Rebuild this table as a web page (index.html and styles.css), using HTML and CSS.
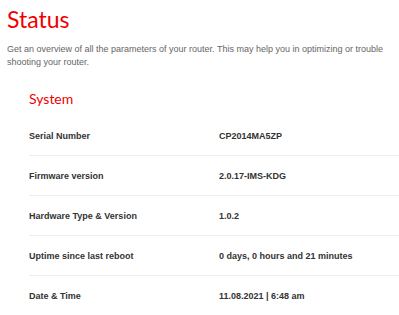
FILE: index.html
```html
<!DOCTYPE html>
<html lang="en">
<head>
  <meta charset="UTF-8" />
  <meta name="viewport" content="width=device-width, initial-scale=1" />
  <title>Status</title>
  <link rel="stylesheet" href="styles.css">
</head>
<body>
  <div class="page">
    <h1 class="page-title">Status</h1>
    <p class="page-intro">
      Get an overview of all the parameters of your router. This may help you in optimizing or trouble
      shooting your router.
    </p>

    <section class="status-section">
      <h2 class="section-title">System</h2>
      <div class="status-list">
        <div class="status-row">
          <span class="status-label">Serial Number</span>
          <span class="status-value">CP2014MA5ZP</span>
        </div>
        <div class="status-row">
          <span class="status-label">Firmware version</span>
          <span class="status-value">2.0.17-IMS-KDG</span>
        </div>
        <div class="status-row">
          <span class="status-label">Hardware Type &amp; Version</span>
          <span class="status-value">1.0.2</span>
        </div>
        <div class="status-row">
          <span class="status-label">Uptime since last reboot</span>
          <span class="status-value">0 days, 0 hours and 21 minutes</span>
        </div>
        <div class="status-row">
          <span class="status-label">Date &amp; Time</span>
          <span class="status-value">11.08.2021 | 6:48 am</span>
        </div>
      </div>
    </section>
  </div>
</body>
</html>
```

FILE: styles.css
```css
body {
  margin: 0;
  padding: 0;
  background: #fff;
  font-family: 'Liberation Sans', Arial, sans-serif;
  color: #333;
}

.page {
  padding: 4px 7px 0 7px;
}

.page-title {
  margin: 0;
  font-family: 'Lato', sans-serif;
  font-weight: 400;
  font-size: 23px;
  line-height: 30px;
  color: #f00000;
}

.page-intro {
  margin: 9px 0 0 0;
  font-size: 9px;
  line-height: 13px;
  color: #666;
}

.status-section {
  padding-left: 22px;
  margin-top: 20px;
}

.section-title {
  margin: 0;
  font-family: 'Lato', sans-serif;
  font-weight: 400;
  font-size: 14px;
  line-height: 20px;
  color: #f00000;
}

.status-list {
  margin-top: 7px;
  margin-right: -7px;
}

.status-row {
  display: flex;
  align-items: center;
  height: 39px;
  border-bottom: 1px solid #eeeeee;
  font-size: 9px;
  font-weight: bold;
  color: #333;
}

.status-label {
  width: 190px;
  flex-shrink: 0;
}
```
